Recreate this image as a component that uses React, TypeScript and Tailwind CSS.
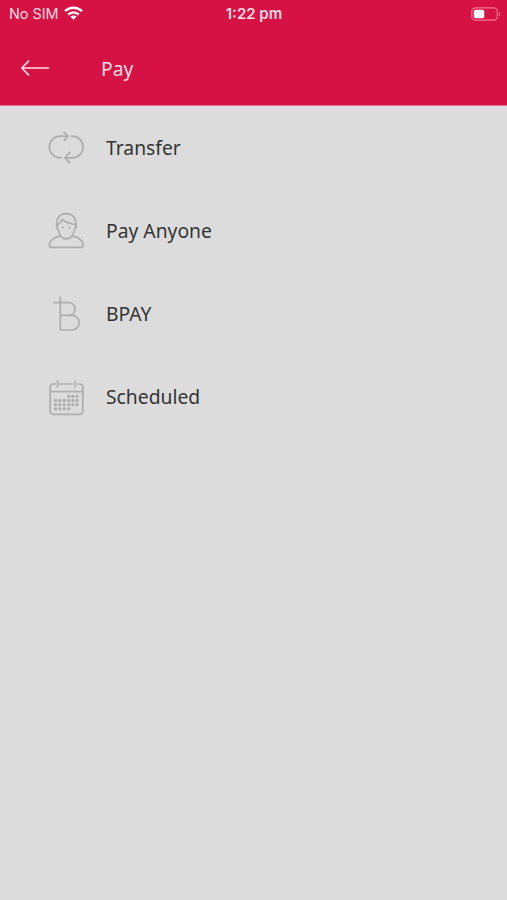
import type { ReactNode } from "react";

function Icon({ children }: { children: ReactNode }) {
  return (
    <svg
      width="36"
      height="37"
      viewBox="0 0 36 37"
      fill="none"
      stroke="currentColor"
      strokeWidth="1.7"
      strokeLinecap="round"
      strokeLinejoin="round"
      className="shrink-0 text-[#adadad]"
    >
      {children}
    </svg>
  );
}

const dots = [
  { y: 17.3, xs: [20.7, 24.8, 28.9] },
  { y: 21.5, xs: [7.5, 11.8, 16.2, 20.7, 24.8, 28.9] },
  { y: 25.7, xs: [7.5, 11.8, 16.2, 20.7, 24.8, 28.9] },
  { y: 29.8, xs: [7.5, 11.8, 16.2, 20.7] },
];

const items = [
  {
    label: "Transfer",
    icon: (
      <Icon>
        <path d="M13.2 28.8H12.1A10.8 10.8 0 0 1 12.1 7.2H19.6" />
        <path d="M16.2 3.3 20 7.2 16.2 11.4" />
        <path d="M23.5 7.2H24.3A10.8 10.8 0 0 1 24.3 28.8H17.5" />
        <path d="M21.7 23.5 17 28.8 21.7 33.8" />
      </Icon>
    ),
  },
  {
    label: "Pay Anyone",
    icon: (
      <Icon>
        <path d="M9.2 16.5C7.2 7 11.2 1.7 18.3 1.7S29.4 7 27.4 16.5" />
        <path d="M9.2 12.5C8 14.3 8.5 16.6 10.2 17.3C11.3 23.2 14.2 26.9 18.3 26.9S25.4 23.2 26.5 17.3C28.1 16.6 28.7 14.3 27.4 12.5" />
        <path d="M9.4 13C11.3 11.8 13 10 14.4 7.4C17 10.7 22.6 11.1 27.2 12.8" />
        <path d="M14.4 15.5h1M20.8 15.5h1" />
        <path d="M11.8 24.4C5.2 24.9 1.4 29.3 1.4 33.3Q1.4 35.3 3.2 35.3H33.4Q35.2 35.3 35.2 33.3C35.2 29.3 31.4 24.9 24.8 24.4" />
      </Icon>
    ),
  },
  {
    label: "BPAY",
    icon: (
      <Icon>
        <path d="M12.3 2V35H23.8C28 35 31.1 31.9 31.1 27.7S28 20.4 23.8 20.4H12.3" />
        <path d="M6 7.6H20.5C24.4 7.6 27 10.3 27 14S24.4 20.4 20.5 20.4" />
      </Icon>
    ),
  },
  {
    label: "Scheduled",
    icon: (
      <Icon>
        <path d="M7.2 5H5.3Q2.2 5 2.2 8.2V31.8Q2.2 35.3 5.7 35.3H31.3Q34.8 35.3 34.8 31.8V8.2Q34.8 5 31.7 5H29.8M12.2 5H24.6M2.2 12.6H34.8" />
        <path d="M9.6 2V8M27.2 2V8" />
        <g fill="currentColor" stroke="none">
          {dots.map((row) =>
            row.xs.map((x) => <circle key={`${x}-${row.y}`} cx={x} cy={row.y} r="1.65" />)
          )}
        </g>
      </Icon>
    ),
  },
];

function StatusBar() {
  return (
    <div className="grid h-[27px] grid-cols-3 items-center pr-[6px] pl-[9px] font-['Inter',sans-serif] text-[#ffdce5]">
      <div className="flex items-center gap-[5px]">
        <span className="text-[14.4px] whitespace-nowrap">No SIM</span>
        <svg width="19" height="14" viewBox="0 0 19 14" fill="none" stroke="#fff" strokeWidth="2.5">
          <path d="M1 5.2C5.8.5 13.2.5 18 5.2" />
          <path d="M4.2 8.6C7.3 5.7 11.7 5.7 14.8 8.6" />
          <path d="M9.5 13.7 6.4 10.7C8.2 9.2 10.8 9.2 12.6 10.7Z" fill="#fff" stroke="none" />
        </svg>
      </div>
      <span className="pt-[2px] pr-[2px] text-center text-[15px] font-semibold">1:22 pm</span>
      <svg width="30" height="14" viewBox="0 0 30 14" fill="none" className="justify-self-end">
        <rect x=".8" y=".8" width="25.5" height="12.4" rx="3.6" stroke="#f07594" strokeWidth="1.2" />
        <rect x="2.8" y="2.8" width="10.5" height="8.4" rx="1.8" fill="#fff" />
        <path d="M28 4.8C29.8 5.5 29.8 8.5 28 9.2Z" fill="#f07594" />
      </svg>
    </div>
  );
}

export default function App() {
  return (
    <main className="min-h-screen bg-[#dcdcdc] font-['Noto_Sans',sans-serif] text-[#343434]">
      <header className="h-[106px] border-b border-[#e0708c] bg-[#d61244]">
        <StatusBar />
        <div className="flex h-[82px] items-center pl-5 text-[#ffdce5]">
          <button aria-label="Back" className="mr-[51px]">
            <svg
              width="30"
              height="18"
              viewBox="0 0 30 18"
              fill="none"
              stroke="currentColor"
              strokeWidth="1.7"
              strokeLinecap="round"
              strokeLinejoin="round"
            >
              <path d="M28.5 9H1.8M8.6 2.2 1.8 9 8.6 15.8" />
            </svg>
          </button>
          <h1 className="pt-[3px] text-[19.3px]">Pay</h1>
        </div>
      </header>
      <ul>
        {items.map((item) => (
          <li key={item.label} className="flex h-[83.2px] items-center gap-[22px] pl-12">
            {item.icon}
            <span className="pt-[1.5px] text-[19.3px]">{item.label}</span>
          </li>
        ))}
      </ul>
    </main>
  );
}
